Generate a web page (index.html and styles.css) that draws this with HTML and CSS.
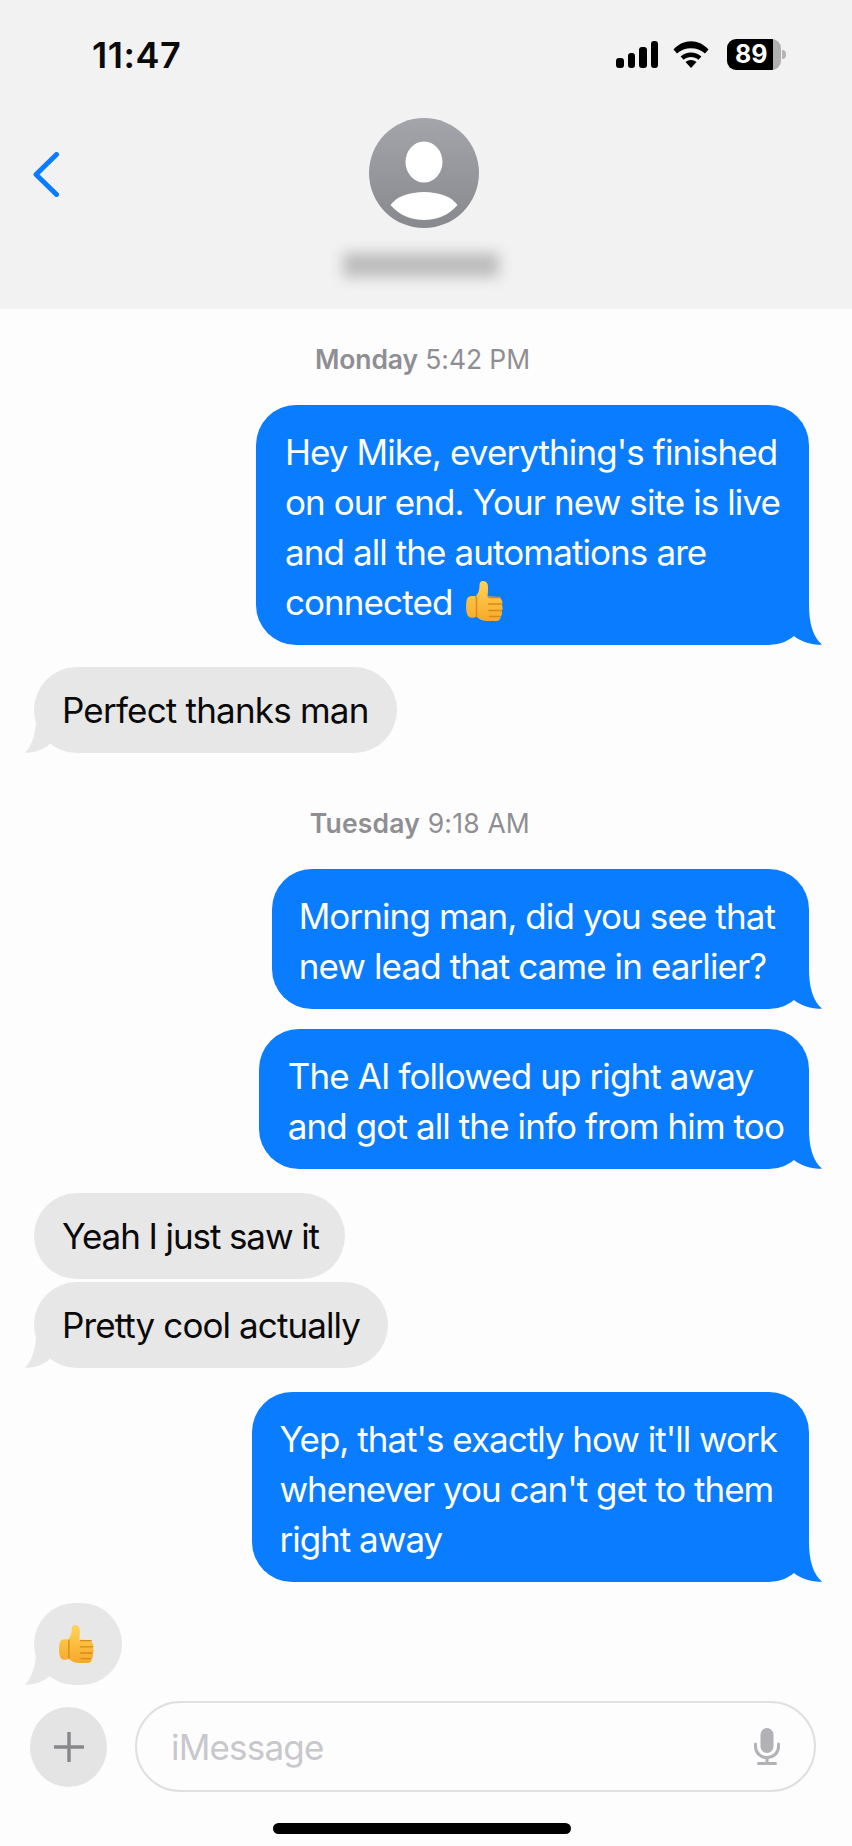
FILE: index.html
```html
<!DOCTYPE html>
<html lang="en">
  <head>
    <meta charset="UTF-8" />
    <meta name="viewport" content="width=device-width, initial-scale=1.0" />
    <title>Messages</title>
    <link rel="stylesheet" href="styles.css">
  </head>
  <body>
    <svg class="defs" width="0" height="0">
      <symbol id="tail" viewBox="0 0 33 40" preserveAspectRatio="none">
        <path d="M20 0C20 18 24 32 33 39.5C24 40.5 12 37 5 31L0 20Z" />
      </symbol>
      <linearGradient id="thumb-fill" x1="0" y1="0" x2="0" y2="1">
        <stop offset="0" stop-color="#ffd35a" />
        <stop offset="1" stop-color="#f7a928" />
      </linearGradient>
      <symbol id="thumb" viewBox="0 0 38 42">
        <path fill="url(#thumb-fill)" d="M18 1C15.5 1 14.5 3 14.5 5.5C14.5 10 13.5 13 10.5 16.5C8 15.5 4 16 2.5 18C0.5 21 0.5 33 3 36C5 38.5 9 38 11.5 36.5C14 39.5 18 41 23 41H31C34 41 36 39 35.5 36.5C37 35.5 37.5 33 36.5 31C38 29.5 38 27 37 25.5C38 23.5 37.5 19 34 17.5C31 16.5 26 16.5 22.5 16.5C23 11 23.5 7 22.5 4C21.8 2 20 1 18 1Z" />
        <path fill="none" stroke="#d98a16" stroke-width="1.4" stroke-linecap="round" d="M24 17.5H35M23.5 24H36.5M24 30.5H36M24.5 36.5H34.5M11.5 17V36" />
      </symbol>
    </svg>

    <header class="top">
      <div class="status">
        <span class="time">11:47</span>
        <div class="status-icons">
          <div class="signal"><i></i><i></i><i></i><i></i></div>
          <svg class="wifi" viewBox="0 0 36 27">
            <path d="M18 27L12.5 21C15.6 18.2 20.4 18.2 23.5 21Z" />
            <path d="M7.6 15.6L10.6 18.8C14.8 15 21.2 15 25.4 18.8L28.4 15.6C22.4 10 13.6 10 7.6 15.6Z" />
            <path d="M0.5 8.6L4 12.6C11.8 5.6 24.2 5.6 32 12.6L35.5 8.6C25.6 -2.4 10.4 -2.4 0.5 8.6Z" />
          </svg>
          <div class="battery">
            <div class="battery-body"><span class="battery-level">89</span></div>
            <div class="battery-cap"></div>
          </div>
        </div>
      </div>
      <div class="contact">
        <svg class="back" viewBox="0 0 26 45">
          <path d="M23.5 2.5L3 22.5L23.5 42.5" />
        </svg>
        <svg class="avatar" viewBox="0 0 110 110">
          <defs>
            <linearGradient id="avatar-fill" x1="0" y1="0" x2="0" y2="1">
              <stop offset="0" stop-color="#a4a5ab" />
              <stop offset="1" stop-color="#88898f" />
            </linearGradient>
          </defs>
          <circle cx="55" cy="55" r="55" fill="url(#avatar-fill)" />
          <ellipse cx="55" cy="44" rx="18.5" ry="20.5" fill="#fff" />
          <path fill="#fff" d="M21.5 87C27 79 40 74 55 74S83 79 88.500 87C80 97 68 102 55 102S30 97 21.500 87Z" />
        </svg>
        <div class="name-blur"></div>
      </div>
    </header>

    <main class="thread">
      <p class="stamp"><b>Monday</b> 5:42 PM</p>
      <div class="bubble out m1">
        Hey Mike, everything's finished<br />on our end. Your new site is live<br />and all the automations are<br />connected <svg class="emoji"><use href="#thumb" /></svg>
        <svg class="tail"><use href="#tail" /></svg>
      </div>
      <div class="bubble in m2">
        Perfect thanks man
        <svg class="tail"><use href="#tail" /></svg>
      </div>

      <p class="stamp second"><b>Tuesday</b> 9:18 AM</p>
      <div class="bubble out m3">
        Morning man, did you see that<br />new lead that came in earlier?
        <svg class="tail"><use href="#tail" /></svg>
      </div>
      <div class="bubble out m4">
        The AI followed up right away<br />and got all the info from him too
        <svg class="tail"><use href="#tail" /></svg>
      </div>
      <div class="bubble in m5">Yeah I just saw it</div>
      <div class="bubble in m6">
        Pretty cool actually
        <svg class="tail"><use href="#tail" /></svg>
      </div>
      <div class="bubble out m7">
        Yep, that's exactly how it'll work<br />whenever you can't get to them<br />right away
        <svg class="tail"><use href="#tail" /></svg>
      </div>
      <div class="bubble in thumb-only">
        <svg class="emoji"><use href="#thumb" /></svg>
        <svg class="tail"><use href="#tail" /></svg>
      </div>
    </main>

    <footer class="composer">
      <div class="plus">
        <svg viewBox="0 0 30 30"><path d="M15 1V29M1 15H29" /></svg>
      </div>
      <div class="field">
        <span class="placeholder">iMessage</span>
        <svg class="mic" viewBox="0 0 26 37">
          <rect class="mic-head" x="6.500" y="0" width="13" height="25" rx="6.500" />
          <path class="mic-arc" d="M1.500 16V18.500C1.500 25 6.500 29.500 13 29.500S24.500 25 24.500 18.500V16M13 29.500V35.500M4.500 35.500H21.500" />
        </svg>
      </div>
    </footer>
    <div class="home-bar"></div>
  </body>
</html>
```

FILE: styles.css
```css
body {
  margin: 0;
  width: 852px;
  height: 1846px;
  overflow: hidden;
  background-color: #fdfdfd;
  font-family: "Inter", "Liberation Sans", sans-serif;
}

.defs {
  display: block;
  height: 0;
}

.top {
  height: 309px;
  background-color: #f2f2f2;
}

.status {
  height: 118px;
  display: flex;
  justify-content: space-between;
  padding-left: 92px;
  padding-right: 66px;
}

.time {
  margin-top: 33px;
  font-size: 36px;
  line-height: 44px;
  font-weight: 600;
  letter-spacing: 0.5px;
  color: #0a0a0a;
}

.status-icons {
  display: flex;
  align-items: flex-start;
  padding-top: 39px;
}

.signal {
  display: flex;
  align-items: flex-end;
  gap: 4px;
  height: 27px;
  margin-top: 2px;
}

.signal i {
  display: block;
  width: 7.500px;
  background-color: #000;
  border-radius: 3px;
}

.signal i:nth-child(1) { height: 10px; }
.signal i:nth-child(2) { height: 15px; }
.signal i:nth-child(3) { height: 21px; }
.signal i:nth-child(4) { height: 27px; }

.wifi {
  width: 36px;
  height: 27px;
  margin-top: 2px;
  margin-left: 15px;
  margin-right: 18px;
}

.battery {
  display: flex;
  align-items: center;
  height: 31px;
}

.battery-body {
  width: 54px;
  height: 31px;
  box-sizing: border-box;
  padding-left: 8px;
  border-radius: 9px;
  background: linear-gradient(90deg, #000 46px, #b0b0b0 46px);
  display: flex;
  align-items: center;
}

.battery-level {
  font-size: 25px;
  font-weight: 700;
  color: #fff;
  line-height: 31px;
}

.battery-cap {
  width: 4px;
  height: 9px;
  margin-left: 1px;
  background-color: #b5b5b5;
  border-radius: 0 4px 4px 0;
}

.contact {
  position: relative;
  display: flex;
  flex-direction: column;
  align-items: center;
}

.back {
  position: absolute;
  left: 33px;
  top: 34px;
  width: 26px;
  height: 45px;
  fill: none;
  stroke: #0a7cff;
  stroke-width: 5;
  stroke-linecap: round;
  stroke-linejoin: round;
}

.avatar {
  width: 110px;
  height: 110px;
  margin-left: -5px;
}

.name-blur {
  width: 156px;
  height: 24px;
  margin-top: 25px;
  margin-left: -10px;
  background-color: #bcbcbc;
  filter: blur(7px);
}

.thread {
  display: flex;
  flex-direction: column;
  padding-top: 35px;
}

.stamp {
  margin: 0 322px 0 0;
  height: 30px;
  line-height: 30px;
  text-align: right;
  font-size: 26.500px;
  letter-spacing: -0.1px;
  color: #8e8e93;
}

.stamp b {
  font-weight: 600;
}

.stamp.second {
  margin-top: 55px;
  letter-spacing: 0.2px;
}

.bubble {
  position: relative;
  width: fit-content;
  box-sizing: border-box;
  white-space: nowrap;
  font-size: 35px;
  line-height: 50px;
  letter-spacing: -0.9px;
}

.out {
  align-self: flex-end;
  margin-right: 43px;
  padding: 22px 29px 18px 29px;
  border-radius: 40px;
  background-color: #0a7cff;
  color: #fff;
}

.in {
  align-self: flex-start;
  margin-left: 34px;
  padding: 18px 28px;
  border-radius: 43px;
  background-color: #e7e7e7;
  color: #0a0a0a;
}

.m1 { margin-top: 31px; }
.m2 { margin-top: 22px; letter-spacing: -0.8px; }
.m3 { margin-top: 31px; padding-left: 27px; padding-right: 34px; }
.m4 { margin-top: 20px; padding-right: 25px; }
.m5 { margin-top: 24px; padding-right: 26px; letter-spacing: -1.1px; }
.m6 { margin-top: 3px; }
.m7 { margin-top: 24px; padding-left: 27px; padding-right: 32px; letter-spacing: -1px; }

.tail {
  position: absolute;
  bottom: 0;
  width: 33px;
  height: 40px;
}

.out .tail {
  right: -13px;
  fill: #0a7cff;
}

.in .tail {
  left: -9px;
  width: 29px;
  fill: #e7e7e7;
  transform: scaleX(-1);
}

.emoji {
  width: 38px;
  height: 42px;
  margin-left: 4px;
  vertical-align: -7px;
}

.thumb-only {
  margin-top: 21px;
  width: 88px;
  height: 82px;
  padding: 0;
  border-radius: 41px;
  display: flex;
  align-items: center;
  justify-content: center;
}

.thumb-only .emoji {
  width: 36px;
  height: 40px;
  margin-left: -4px;
}

.composer {
  display: flex;
  align-items: center;
  gap: 28px;
  margin-top: 16px;
  padding-left: 30px;
  padding-right: 36px;
}

.plus {
  flex: none;
  width: 77px;
  height: 80px;
  border-radius: 50%;
  background-color: #e4e4e4;
  display: flex;
  align-items: center;
  justify-content: center;
}

.plus svg {
  width: 30px;
  height: 30px;
  fill: none;
  stroke: #88888c;
  stroke-width: 3.500;
  stroke-linecap: round;
}

.field {
  flex: 1;
  height: 91px;
  box-sizing: border-box;
  border: 2px solid #e0e0e2;
  border-radius: 46px;
  padding-left: 34px;
  padding-right: 34px;
  display: flex;
  align-items: center;
  justify-content: space-between;
}

.placeholder {
  font-size: 35px;
  letter-spacing: -0.8px;
  color: #c8c8cc;
}

.mic {
  width: 26px;
  height: 37px;
}

.mic-head {
  fill: #b2b2b6;
}

.mic-arc {
  fill: none;
  stroke: #b2b2b6;
  stroke-width: 3;
  stroke-linecap: round;
}

.home-bar {
  width: 298px;
  height: 11px;
  margin: 31px auto 0;
  background-color: #000;
  border-radius: 6px;
  transform: translateX(-4px);
}
```
